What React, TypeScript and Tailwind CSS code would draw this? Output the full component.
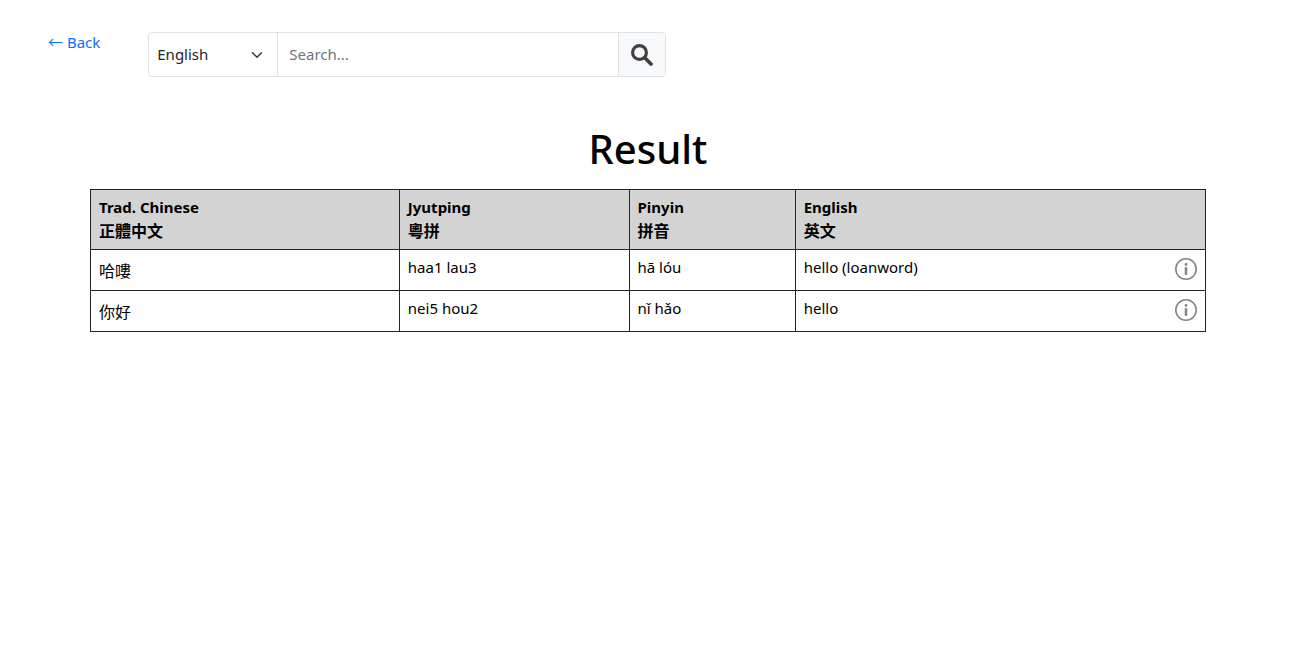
import { useState } from "react";

const columns = [
  { label: "Trad. Chinese", native: "正體中文", width: "w-[27.7%]" },
  { label: "Jyutping", native: "粵拼", width: "w-[20.6%]" },
  { label: "Pinyin", native: "拼音", width: "w-[14.9%]" },
  { label: "English", native: "英文", width: "w-[36.8%]" },
];

const entries = [
  { chinese: "哈嘍", jyutping: "haa1 lau3", pinyin: "hā lóu", english: "hello (loanword)" },
  { chinese: "你好", jyutping: "nei5 hou2", pinyin: "nǐ hǎo", english: "hello" },
];

function SearchIcon() {
  return (
    <svg viewBox="0 0 24 24" className="size-6" fill="none" stroke="#414042" aria-hidden="true">
      <circle cx="9.5" cy="9.5" r="6.9" strokeWidth="3.2" />
      <path d="M14.5 14.5 21 21" strokeWidth="3.8" strokeLinecap="round" />
    </svg>
  );
}

function InfoIcon() {
  return (
    <svg viewBox="0 0 24 24" className="size-6" fill="#858585" aria-hidden="true">
      <circle cx="12" cy="12" r="10.2" fill="none" stroke="#858585" strokeWidth="1.6" />
      <circle cx="12" cy="7.5" r="1.4" />
      <path d="M10.7 10.2h2.6v7.6h-2.6z" />
    </svg>
  );
}

function SearchBar() {
  const [language, setLanguage] = useState("English");
  const [query, setQuery] = useState("");
  return (
    <form
      onSubmit={(event) => event.preventDefault()}
      className="flex h-[45px] w-full max-w-[518px] overflow-hidden rounded border border-[#dee2e6]"
    >
      <div className="grid w-[129px] shrink-0 items-center border-r border-[#dee2e6]">
        <select
          aria-label="Search language"
          value={language}
          onChange={(event) => setLanguage(event.target.value)}
          className="col-start-1 row-start-1 h-full w-full appearance-none bg-transparent pb-0.5 pl-2 text-[#212529]"
        >
          <option>English</option>
          <option>Jyutping</option>
          <option>Pinyin</option>
          <option>Chinese</option>
        </select>
        <svg
          viewBox="0 0 16 16"
          className="pointer-events-none col-start-1 row-start-1 mr-3.5 size-3 justify-self-end"
          fill="none"
          stroke="#343a40"
          strokeWidth="2"
          strokeLinecap="round"
          strokeLinejoin="round"
          aria-hidden="true"
        >
          <path d="m2 5 6 6 6-6" />
        </svg>
      </div>
      <input
        type="text"
        aria-label="Search"
        placeholder="Search..."
        value={query}
        onChange={(event) => setQuery(event.target.value)}
        className="min-w-0 flex-1 px-[11px] pb-0.5 text-[#212529] placeholder:text-[#6c757d]"
      />
      <button
        type="submit"
        aria-label="Submit search"
        className="flex w-[47px] shrink-0 items-center justify-center border-l border-[#dee2e6] bg-[#f8f9fa]"
      >
        <SearchIcon />
      </button>
    </form>
  );
}

export default function App() {
  return (
    <div className="bg-white font-['Noto_Sans','Noto_Sans_CJK_TC',sans-serif] text-[15px] leading-6 text-black">
      <header className="flex items-start gap-12 px-12 pt-8">
        <a href="#back" className="-my-0.5 shrink-0 text-[#0d6efd]">
          ← Back
        </a>
        <SearchBar />
      </header>
      <main className="px-[90px] pt-12">
        <h1 className="mb-4 text-center text-[40px] leading-12 font-medium">Result</h1>
        <table className="w-full table-fixed border-collapse border border-[#212529]">
          <thead>
            <tr className="bg-[#d3d3d3] text-left align-top">
              {columns.map((column) => (
                <th
                  key={column.label}
                  scope="col"
                  className={`${column.width} border border-[#212529] px-2 pt-[5px] pb-1.5 leading-6 font-bold`}
                >
                  {column.label}
                  <span lang="zh-Hant" className="block text-base leading-6">
                    {column.native}
                  </span>
                </th>
              ))}
            </tr>
          </thead>
          <tbody>
            {entries.map((entry) => (
              <tr key={entry.chinese} className="align-top">
                <td lang="zh-Hant" className="border border-[#212529] px-2 pt-[9px] text-base">
                  {entry.chinese}
                </td>
                <td className="border border-[#212529] px-2 pt-[5px]">{entry.jyutping}</td>
                <td className="border border-[#212529] px-2 pt-[5px]">{entry.pinyin}</td>
                <td className="border border-[#212529] px-2 pt-[5px] pb-[9px]">
                  <div className="flex items-start justify-between">
                    {entry.english}
                    <button type="button" aria-label={`Details for ${entry.chinese}`} className="-mr-px pt-0.5">
                      <InfoIcon />
                    </button>
                  </div>
                </td>
              </tr>
            ))}
          </tbody>
        </table>
      </main>
    </div>
  );
}
